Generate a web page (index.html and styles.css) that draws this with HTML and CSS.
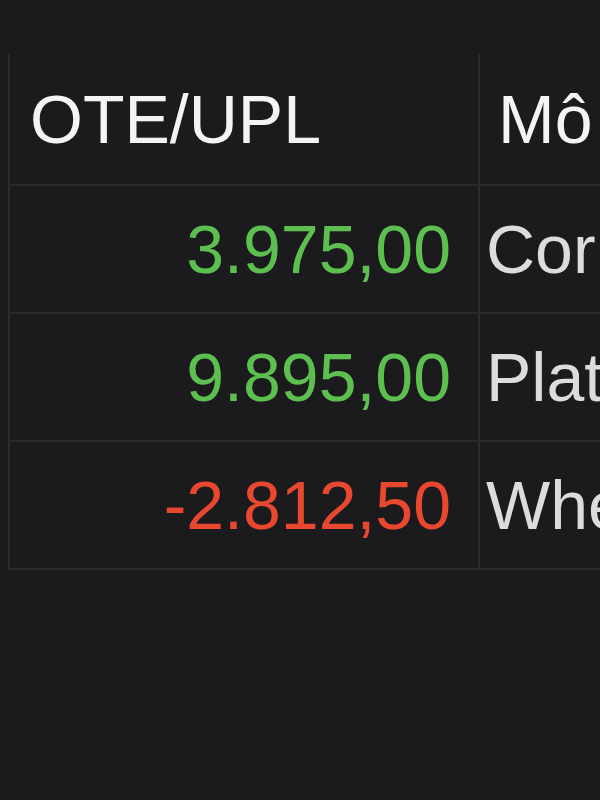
FILE: index.html
```html
<!DOCTYPE html>
<html lang="vi">
<head>
  <meta charset="UTF-8" />
  <meta name="viewport" content="width=device-width, initial-scale=1.0"/>
  <title>Positions</title>
  <link rel="stylesheet" href="styles.css">
</head>
<body>

  <!-- Positions grid (zoomed) -->
  <table class="grid">
    <colgroup>
      <col class="col-pl">
      <col class="col-desc">
    </colgroup>
    <thead>
      <tr>
        <th class="pl">OTE/UPL</th>
        <th class="desc">Mô tả</th>
      </tr>
    </thead>
    <tbody>
      <tr>
        <td class="pl up">3.975,00</td>
        <td class="desc">Corn</td>
      </tr>
      <tr>
        <td class="pl up">9.895,00</td>
        <td class="desc">Platinum</td>
      </tr>
      <tr>
        <td class="pl down">-2.812,50</td>
        <td class="desc">Wheat</td>
      </tr>
    </tbody>
  </table>

</body>
</html>
```

FILE: styles.css
```css
html, body {
  margin: 0;
  padding: 0;
  background: #1b1b1d;
  overflow: hidden;
  height: 100%;
}

body {
  font-family: "Liberation Sans", Arial, sans-serif;
}

.grid {
  border-collapse: collapse;
  table-layout: fixed;
  margin-top: 54px;
  margin-left: 8px;
  width: 900px;
  font-size: 68px;
  white-space: nowrap;
}

.col-pl {
  width: 470px;
}

.col-desc {
  width: 430px;
}

.grid th,
.grid td {
  border: 2px solid #2b2b2d;
  border-top: none;
  padding: 0;
  line-height: 1;
  overflow: hidden;
}

.grid thead th {
  height: 130px;
  font-weight: normal;
  color: #f4f4f4;
  text-align: left;
}

.grid tbody td {
  height: 126px;
  color: #dcdcdc;
}

.grid th.pl {
  padding-left: 20px;
}

.grid th.desc {
  padding-left: 18px;
}

.grid td.pl {
  text-align: right;
  padding-right: 27px;
}

.grid td.desc {
  padding-left: 6px;
}

.grid td.up {
  color: #5cbf4f;
}

.grid td.down {
  color: #e8482f;
}
```
